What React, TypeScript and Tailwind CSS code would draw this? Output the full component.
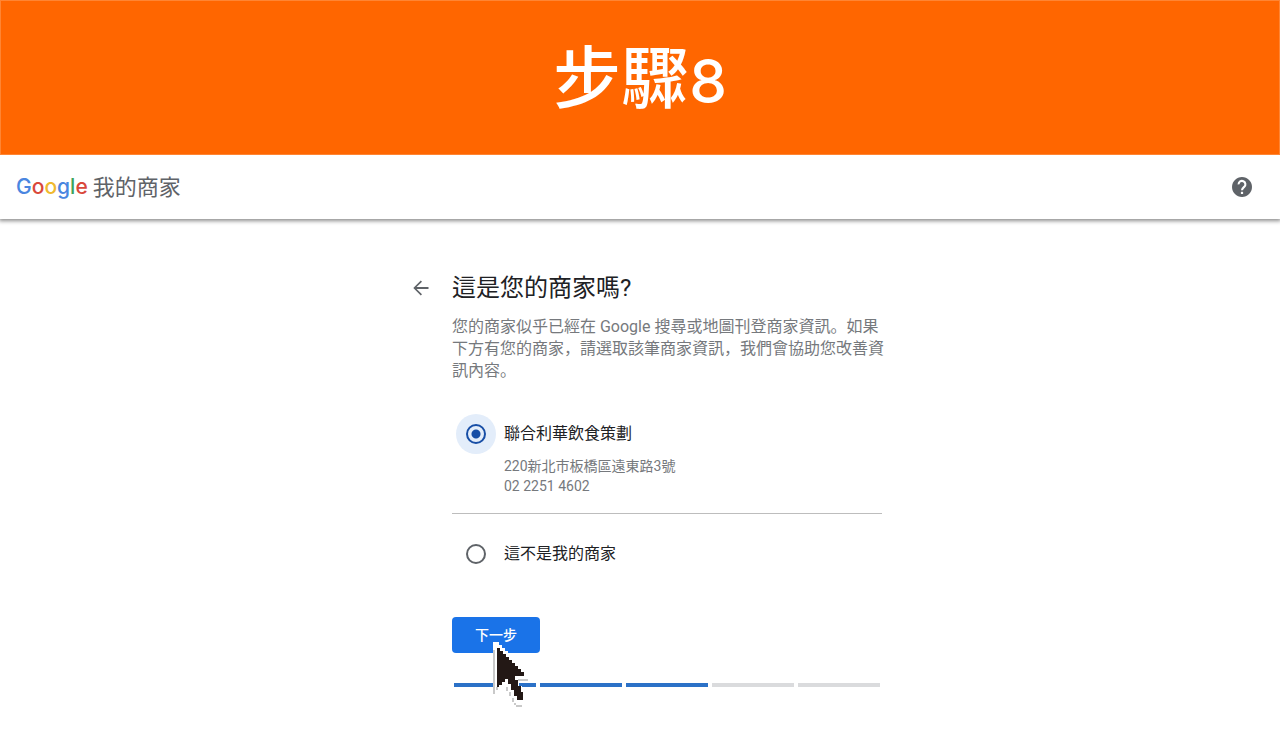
import { useState } from "react"

const wordmark = [
  { letter: "G", color: "text-[#4a86e0]" },
  { letter: "o", color: "text-[#d9483b]" },
  { letter: "o", color: "text-[#f0b92f]" },
  { letter: "g", color: "text-[#4a86e0]" },
  { letter: "l", color: "text-[#3fa35b]" },
  { letter: "e", color: "text-[#d9483b]" },
]

const totalSteps = 5
const currentStep = 3

function HelpIcon() {
  return (
    <svg viewBox="0 0 24 24" className="size-6" fill="#5f6368" aria-hidden="true">
      <path d="M12 2C6.48 2 2 6.48 2 12s4.48 10 10 10 10-4.48 10-10S17.52 2 12 2z" />
      <path d="M8.6 9.4a3.4 3.4 0 1 1 5.6 2.5c-1.3 1.1-2.2 1.7-2.2 3.4" fill="none" stroke="#fff" strokeWidth="2.1" />
      <path d="M10.9 16.8h2.2v2.2h-2.2z" fill="#fff" />
    </svg>
  )
}

function BackIcon() {
  return (
    <svg viewBox="0 0 24 24" className="size-6" fill="#5f6368" aria-hidden="true">
      <path d="M19.5 11.1H7.6l5.4-5.4L11.8 4.5 4.3 12l7.5 7.5 1.2-1.2-5.4-5.4h11.9z" />
    </svg>
  )
}

function Cursor() {
  return (
    <svg
      viewBox="0 0 38 66"
      className="absolute left-[40px] top-[25px] w-[38px] h-[66px] pointer-events-none"
      shapeRendering="crispEdges"
      aria-hidden="true"
    >
      <path
        d="M1 0h6v3h3v3h3v3h3v3h3v3h3v3h3v3h3v3h3v3h3v7h3v4H27v6h3v6h3v10h-3v4h-9v-4h-3v-6h-3v-6h-3v-2H7v4H4v4H1z"
        fill="#fff"
      />
      <path
        d="M1 8h2v44H1zM4 45h2v3H4zM26 37h10v2H26zM14 45h2v4h-2zM17 50h2v4h-2zM20 56h2v4h-2zM22 61h2v2h-2zM24 63h6v2h-6z"
        fill="#c9c9c9"
      />
      <path
        d="M5 6h3v3h3v3h3v3h3v3h3v3h3v3h3v3h3v3h3v4h-9v4h3v6h3v6h2v8h-6v-4h-3v-6h-3v-6h-3v-5h-3v3h-3v3H7v2H5z"
        fill="#231815"
      />
    </svg>
  )
}

export default function App() {
  const [choice, setChoice] = useState("match")

  const radioClass =
    "appearance-none size-5 shrink-0 rounded-full border-2 border-[#5f6368] checked:border-[#174ea6] checked:bg-[radial-gradient(circle,#174ea6_4px,transparent_5px)]"

  return (
    <div className="bg-white font-[Roboto,'Noto_Sans_CJK_JP',sans-serif] text-[#202124]">
      <div className="relative z-10 bg-[#ff6600] h-[155px] border border-[#ff8533] flex justify-center">
        <h1 className="text-white text-[68px] leading-[146px] font-medium font-['Noto_Sans_CJK_TC',sans-serif]">
          步驟<span className="text-[60px] font-[Inter,sans-serif]">8</span>
        </h1>
      </div>

      <header className="h-16 px-4 flex items-center justify-between shadow-[0_1px_4px_1px_rgba(0,0,0,0.45)]">
        <a href="#" className="flex items-center gap-[5px]">
          <span className="text-[21px] font-medium font-[Inter,sans-serif]">
            {wordmark.map((item, index) => (
              <span key={index} className={item.color}>
                {item.letter}
              </span>
            ))}
          </span>
          <span className="text-[22px] text-[#5f6368]">我的商家</span>
        </a>
        <button type="button" aria-label="說明" className="mr-2.5">
          <HelpIcon />
        </button>
      </header>

      <main className="max-w-[484px] mx-auto pt-[51px] pb-9">
        <div className="flex items-center">
          <button type="button" aria-label="返回" className="w-[54px] pl-[11px]">
            <BackIcon />
          </button>
          <h2 className="text-2xl leading-9">這是您的商家嗎?</h2>
        </div>

        <form className="pl-[54px]" onSubmit={(e) => e.preventDefault()}>
          <p className="mt-2.5 -mr-1 leading-[22px] text-[#76797d]">
            您的商家似乎已經在 Google 搜尋或地圖刊登商家資訊。如果下方有您的商家，請選取該筆商家資訊，我們會協助您改善資訊內容。
          </p>

          <div className="mt-8 pb-[17px] flex border-b border-[#bdbdbd]">
            <span className="size-10 ml-1 mr-2 shrink-0 flex items-center justify-center rounded-full bg-[#e3edfa]">
              <input
                id="match"
                type="radio"
                name="business"
                checked={choice === "match"}
                onChange={() => setChoice("match")}
                className={radioClass}
              />
            </span>
            <label htmlFor="match">
              <span className="block leading-10">聯合利華飲食策劃</span>
              <span className="block mt-0.5 text-sm leading-5 text-[#76797d]">220新北市板橋區遠東路3號</span>
              <span className="block text-sm leading-5 text-[#76797d]">02 2251 4602</span>
            </label>
          </div>

          <div className="mt-5 flex items-center">
            <span className="size-10 ml-1 mr-2 shrink-0 flex items-center justify-center">
              <input
                id="other"
                type="radio"
                name="business"
                checked={choice === "other"}
                onChange={() => setChoice("other")}
                className={radioClass}
              />
            </span>
            <label htmlFor="other">這不是我的商家</label>
          </div>

          <div className="relative mt-[43px]">
            <button type="submit" className="h-9 w-[88px] rounded bg-[#1a73e8] text-sm font-medium text-white">
              下一步
            </button>
            <Cursor />
          </div>

          <div className="mt-[30px] px-0.5 flex gap-1">
            {Array.from({ length: totalSteps }, (_, index) => (
              <span key={index} className={`h-1 flex-1 ${index < currentStep ? "bg-[#2b71c7]" : "bg-[#dadbdd]"}`} />
            ))}
          </div>
        </form>
      </main>
    </div>
  )
}
